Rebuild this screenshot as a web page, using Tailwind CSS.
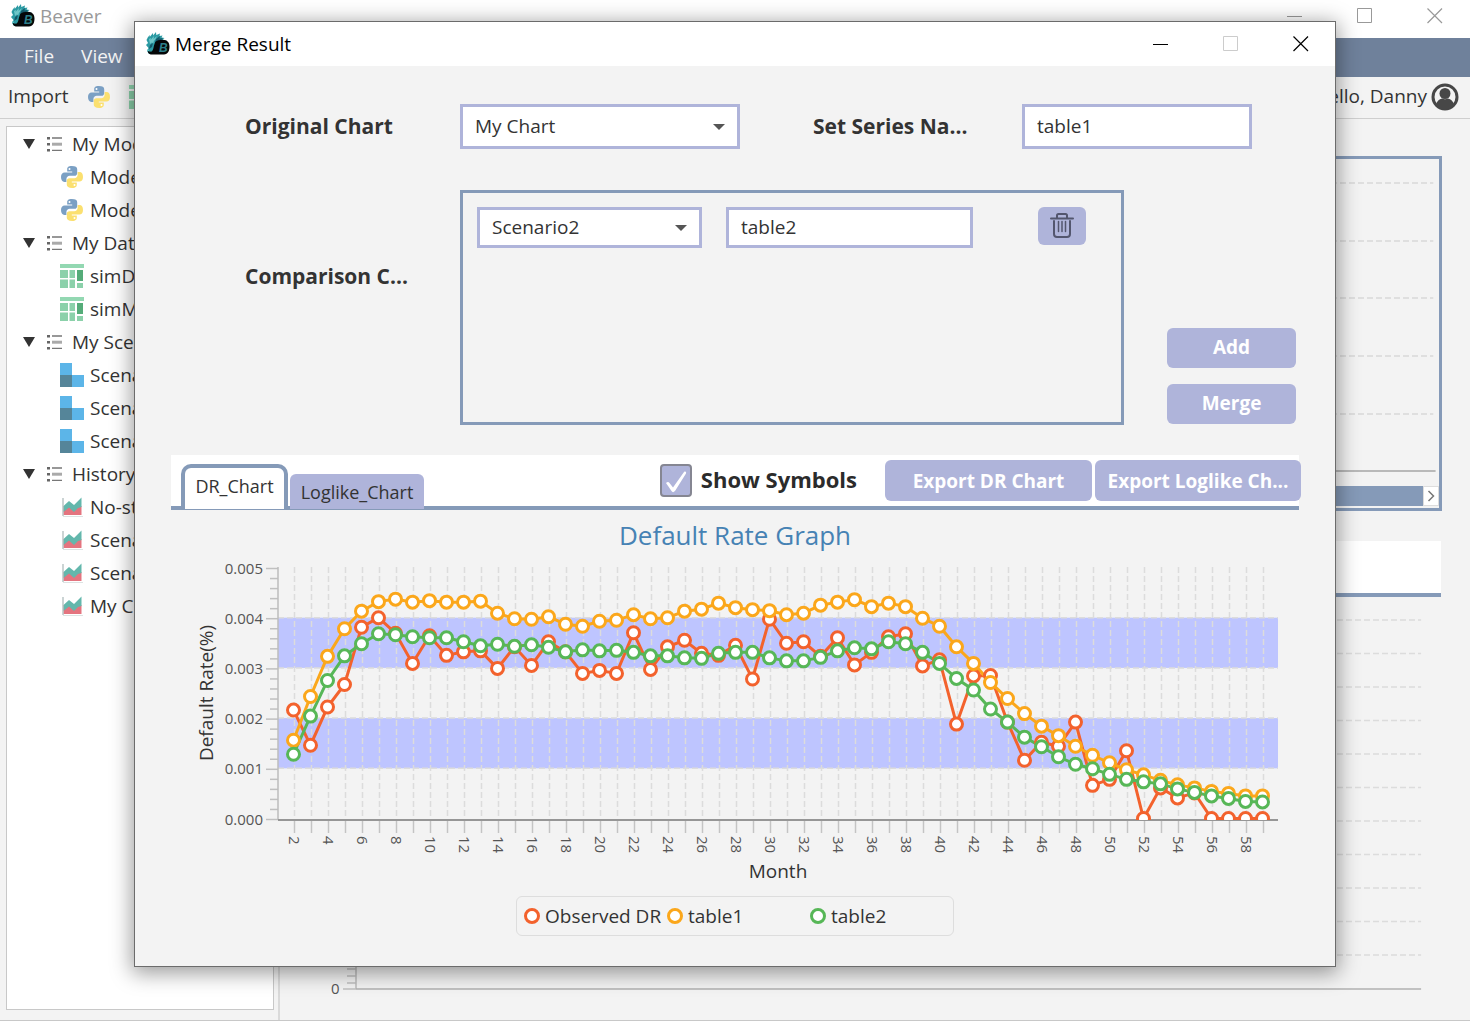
<!DOCTYPE html>
<html lang="en">
<head>
<meta charset="utf-8">
<meta name="viewport" content="width=device-width, initial-scale=1">
<title>Beaver</title>
<script src="https://cdn.jsdelivr.net/npm/@tailwindcss/browser@4"></script>
</head>
<body class="bg-[#f3f3f3] font-['Open_Sans','Noto_Sans',sans-serif] text-[19px] leading-6 text-[#333333]">

<!-- Shared icons -->
<svg class="hidden" aria-hidden="true">
  <symbol id="logo" viewBox="0 0 24 24">
    <path fill="#2b9aa3" d="M2 5l2-2-.3 2L7 1l.2 2.500L10 0l.3 3L14 1.500l-.5 2.500 3-.5-1 2 3 .5-2 1.500L21 9v6l-3 6-15 1-2-3 1.500-3L0 13l2-2L.5 8z"/>
    <path fill="#6fc7c9" d="M3 7l2-1-.5 2L8 4l-.5 3L11 4l-2 4-5 4zM1 17l2 1-1 2zM6 10l2-1-1 3z"/>
    <path fill="#14596a" d="M10 7l4-3-.5 2.500L17 6l-3 3-5 2zM4 13l3-2-1 4-3 2z"/>
    <path fill="#050708" d="M8.500 12c.5-3 3-4 6-4 6-1 9 2 9 6.500S22 22 18 22.500H6c-3 0-4.500-2-4-3.500 1.500 1 3.500 1 4.500-.5 1-1.500 1-4 2-6.500z"/>
    <text x="13" y="20" font-family="Liberation Sans" font-size="12" font-weight="700" font-style="italic" fill="#2b7f8a">B</text>
  </symbol>
  <symbol id="python" viewBox="0 0 24 24">
    <path fill="#7ba0c4" d="M11.800 1C8 1 7.200 2.600 7.200 4.200v2.300h5v.9H4.600C2.500 7.400 1 9 1 12s1.300 4.900 3.400 4.900h2V14c0-1.800 1.500-3.200 3.300-3.200h4.900c1.500 0 2.600-1.200 2.600-2.600v-4C17.200 2.200 15.500 1 11.800 1z"/>
    <path fill="#fbe070" d="M12.200 23c3.800 0 4.600-1.600 4.600-3.200v-2.300h-5v-.9h7.600c2.100 0 3.600-1.600 3.600-4.600s-1.300-4.900-3.400-4.900h-2V10c0 1.800-1.500 3.200-3.300 3.200H9.400c-1.500 0-2.600 1.200-2.600 2.600v4c0 2 1.700 3.200 5.400 3.200z"/>
    <circle cx="9.500" cy="4" r="1" fill="#fff"/><circle cx="14.500" cy="20" r="1" fill="#fff"/>
  </symbol>
  <symbol id="grid" viewBox="0 0 24 24">
    <path fill="#93d8b2" d="M0 0h24v4H0z"/>
    <path fill="#8bd1aa" d="M0 6h8v8H0zM9.500 6H15v8H9.500zM0 15.500h8V24H0zM9.500 15.500H15V24H9.500zM17 19h6v5h-6z"/>
    <path fill="#55ac79" d="M17 6h6v11h-6z"/>
  </symbol>
  <symbol id="blocks" viewBox="0 0 24 24">
    <path fill="#5cb5e8" d="M0 0h12v12h12v12H12V12H0z"/><path fill="#558599" d="M0 12h12v12H0z"/>
  </symbol>
  <symbol id="area" viewBox="0 0 24 24">
    <path fill="#e4747f" d="M3.500 11h18v9h-18z"/>
    <path fill="#63b7ac" d="M3.500 11L9 6l5 4 7.500-7.500V12L18 13l-4 4-5-4.500-5.500 4.500z"/>
    <path fill="none" stroke="#a9b8b8" stroke-width="1.200" d="M3 3v18"/><path stroke="#dde3e3" d="M3 21.500h20"/>
  </symbol>
  <symbol id="list" viewBox="0 0 16 16">
    <path fill="#666" d="M0 1h3v2.500H0zM0 7h3v2.500H0zM0 13h3v2.500H0z"/>
    <path stroke="#777" stroke-width="1.300" d="M5 2h10M5 14.300h10"/><path stroke="#aaa" stroke-width="3" d="M5 8.200h10"/>
  </symbol>
  <symbol id="open" viewBox="0 0 12 10"><path fill="#333" d="M0 0h12L6 10z"/></symbol>
  <symbol id="min" viewBox="0 0 16 16"><path stroke="currentColor" d="M0 8.500h15" shape-rendering="crispEdges"/></symbol>
  <symbol id="max" viewBox="0 0 16 16"><path fill="none" stroke="currentColor" d="M.5.5h14v14H.5z"/></symbol>
  <symbol id="close" viewBox="0 0 16 16"><path fill="none" stroke="currentColor" stroke-width="1.200" d="M.5.5l14.500 14.500M15 .5L.5 15"/></symbol>
</svg>

<div class="relative flex min-h-screen flex-col overflow-hidden border-b border-[#c8c8c8]">
  <!-- Main window -->
  <header class="flex h-[38px] items-center bg-white pr-[27px] pb-[7px] pl-[11px] text-[#999999]">
    <svg class="size-6"><use href="#logo"/></svg>
    <span class="ml-[5px]">Beaver</span>
    <div class="ml-auto flex gap-[54px]">
      <button aria-label="Minimize"><svg class="size-4"><use href="#min"/></svg></button>
      <button aria-label="Maximize"><svg class="size-4"><use href="#max"/></svg></button>
      <button aria-label="Close"><svg class="size-4"><use href="#close"/></svg></button>
    </div>
  </header>
  <nav class="flex h-[39px] items-center gap-[27px] bg-[#6f819b] pb-1 pl-6 text-[#f3f3f3]">
    <button>File</button>
    <button>View</button>
  </nav>
  <div class="flex h-[42px] items-center border-b border-[#cfcfcf] pr-[11px] pb-0.5 pl-2">
    <span class="pb-0.5">Import</span>
    <button class="ml-[18px]" aria-label="Import model"><svg class="size-6"><use href="#python"/></svg></button>
    <button class="ml-[18px]" aria-label="Import data"><svg class="size-6"><use href="#grid"/></svg></button>
    <span class="ml-auto pb-0.5">Hello, Danny</span>
    <svg class="ml-1 size-7" viewBox="0 0 28 28">
      <circle cx="14" cy="14" r="12" fill="#f3f3f3" stroke="#474747" stroke-width="3"/>
      <circle cx="14" cy="10.500" r="5.500" fill="#474747"/>
      <path fill="#474747" d="M5 22c1-4 3-6 6-6.500 2 1 4 1 6 0 3 .5 5 2.500 6 6.500-5 6-13 6-18 0z"/>
    </svg>
  </div>

  <main class="flex flex-1">
    <aside class="mt-[7px] mb-2.5 ml-1.5 w-[268px] border border-[#c8c8c8] bg-white">
      <ul id="tree"></ul>
    </aside>
    <section class="ml-1 flex flex-1 flex-col border-l-2 border-[#dadada] pr-7">
      <div class="mt-[37px] ml-4 flex h-[355px] flex-col border-[3px] border-[#859ab8]">
        <svg class="w-full flex-1" id="topChart"></svg>
        <div class="flex h-6 shrink-0 items-center">
          <div class="h-5 flex-1 bg-[#859ab8]"></div>
          <button class="h-5 w-4 border border-[#dddddd] bg-white" aria-label="Scroll right">
            <svg class="mx-auto h-3 w-2" viewBox="0 0 8 12"><path fill="none" stroke="#777" stroke-width="1.500" d="M1.500 1l5 5-5 5"/></svg>
          </button>
        </div>
      </div>
      <div class="mt-[30px] mr-px ml-4 h-14 border-b-4 border-[#859ab8] bg-white"></div>
      <svg class="w-full flex-1" id="bottomChart"></svg>
    </section>
  </main>

  <!-- Merge dialog -->
  <div role="dialog" aria-label="Merge Result" class="absolute inset-x-[134px] top-[21px] border border-[#6b6b6b] bg-[#f3f3f3] pb-[30px] shadow-[0_4px_20px_2px_rgba(0,0,0,0.4)]">
    <header class="flex h-[44px] items-center bg-white pr-[26px] pb-px pl-[11px] text-black">
      <svg class="size-6"><use href="#logo"/></svg>
      <h1 class="ml-[5px]">Merge Result</h1>
      <div class="ml-auto flex gap-[54px]">
        <button aria-label="Minimize"><svg class="size-4"><use href="#min"/></svg></button>
        <button class="text-[#cccccc]" aria-label="Maximize" disabled><svg class="size-4"><use href="#max"/></svg></button>
        <button aria-label="Close"><svg class="size-4"><use href="#close"/></svg></button>
      </div>
    </header>

    <form class="pt-[38px] pl-[110px]">
      <div class="flex items-center pr-[83px]">
        <label for="original" class="w-[215px] pb-0.5 text-[21px] leading-8 font-bold">Original Chart</label>
        <div class="relative flex-1">
          <select id="original" class="h-[45px] w-full appearance-none border-[3px] border-[#afb4da] bg-white pb-0.5 pl-3 outline-none"><option>My Chart</option></select>
          <svg class="pointer-events-none absolute top-5 right-[15px] h-1.5 w-3" viewBox="0 0 12 6"><path fill="#555" d="M0 0h12L6 6z"/></svg>
        </div>
        <label for="series1" class="ml-[73px] w-[209px] pb-0.5 text-[21px] leading-8 font-bold">Set Series Na...</label>
        <input id="series1" value="table1" class="h-[45px] w-[230px] border-[3px] border-[#afb4da] bg-white px-3 pb-0.5 outline-none">
      </div>

      <div class="mt-[41px] flex pr-[39px]">
        <span class="mt-[70px] w-[215px] text-[21px] leading-8 font-bold">Comparison C...</span>
        <div class="flex h-[235px] flex-1 items-start border-[3px] border-[#859ab8] pt-3.5 pl-3.5">
          <div class="relative w-[225px]">
            <select aria-label="Comparison chart" class="h-[41px] w-full appearance-none border-[3px] border-[#afb4da] bg-white pb-0.5 pl-3 outline-none"><option>Scenario2</option></select>
            <svg class="pointer-events-none absolute top-[18px] right-[15px] h-1.5 w-3" viewBox="0 0 12 6"><path fill="#555" d="M0 0h12L6 6z"/></svg>
          </div>
          <input aria-label="Comparison series name" value="table2" class="ml-6 h-[41px] w-[247px] border-[3px] border-[#afb4da] bg-white px-3 pb-0.5 outline-none">
          <button type="button" aria-label="Delete" class="ml-[65px] flex h-[38px] w-12 items-center justify-center rounded-md bg-[#afb4da] pb-0.5">
            <svg class="h-7 w-6" viewBox="0 0 24 28" fill="none" stroke="#53566e" stroke-width="2" stroke-linejoin="round" stroke-linecap="round"><path d="M1 7.500h22M7 7V4.500C7 3.500 7.500 3 8.500 3h7c1 0 1.500.5 1.500 1.500V7M4 10v13c0 2 1 3 3 3h10c2 0 3-1 3-3V10"/><path stroke-width="1.500" d="M8.500 10.500v10M12 10.500v10M15.500 10.500v10"/></svg>
          </button>
        </div>
        <div class="ml-[43px] flex w-[129px] flex-col justify-end gap-4 pb-px font-bold text-white">
          <button type="button" class="h-10 rounded-md bg-[#afb4da] pb-0.5">Add</button>
          <button type="button" class="h-10 rounded-md bg-[#afb4da] pb-0.5">Merge</button>
        </div>
      </div>
    </form>

    <div class="mt-[30px] mr-9 ml-9">
      <div class="flex h-[55px] items-end border-b-4 border-[#859ab8] bg-white pl-2.5">
        <button class="-mb-[3px] h-[45px] w-[107px] rounded-t-[10px] border-4 border-b-0 border-[#859ab8] bg-white pb-1.5 text-[18px]">DR_Chart</button>
        <button class="-mb-[3px] ml-0.5 h-[35px] w-[134px] rounded-t-md bg-[#afb4da] text-[18px]">Loglike_Chart</button>
        <div class="-mr-0.5 mb-[5px] ml-auto flex items-center">
          <label class="relative mr-7 flex items-center gap-[9px] text-[22px] font-bold text-[#2b2b2b]">
            <input type="checkbox" checked class="h-[33px] w-8 appearance-none rounded border-2 border-[#858692] bg-[#afb4da]">
            <svg class="pointer-events-none absolute left-1 h-6 w-6" viewBox="0 0 24 24"><path fill="#fff" d="M2 14c1.500-1.500 2.500-1.500 3.500 0L9 18.500 20 3c1.500-1 2.500 0 2 1.500L11 22c-1.500 1.500-2.500 1.500-3.500 0z"/></svg>
            <span class="pb-1">Show Symbols</span>
          </label>
          <button class="h-[41px] w-[207px] rounded-md bg-[#afb4da] font-bold text-white">Export DR Chart</button>
          <button class="ml-[3px] h-[41px] w-[206px] rounded-md bg-[#afb4da] font-bold whitespace-nowrap text-white">Export Loglike Ch...</button>
        </div>
      </div>

      <h2 class="mt-[7px] text-center text-[26px] leading-9 text-[#4682b4]">Default Rate Graph</h2>
      <svg id="rateChart" class="mt-[7px] block w-full overflow-visible" viewBox="0 0 1128 328"></svg>

      <ul class="mx-auto mt-2 flex h-10 w-[438px] items-center rounded-md border border-[#dddddd] pl-[7px]">
        <li class="flex w-[143px] items-center gap-[5px] whitespace-nowrap"><span class="size-4 shrink-0 rounded-full border-[3px] border-[#f3622d] bg-white"></span>Observed DR</li>
        <li class="flex w-[143px] items-center gap-[5px]"><span class="size-4 rounded-full border-[3px] border-[#fba71b] bg-white"></span>table1</li>
        <li class="flex items-center gap-[5px]"><span class="size-4 rounded-full border-[3px] border-[#57b757] bg-white"></span>table2</li>
      </ul>
    </div>
  </div>
</div>

<script>
  // Project tree
  const groups = [
    ['My Models', 'python', ['Model1', 'Model2']],
    ['My Datasets', 'grid', ['simDTS', 'simMEV']],
    ['My Scenarios', 'blocks', ['Scenario1', 'Scenario2', 'Scenario3']],
    ['History', 'area', ['No-stress', 'Scenario1', 'Scenario2', 'My Chart']],
  ];
  document.getElementById('tree').innerHTML = groups.map(([name, icon, items]) => `
    <li>
      <div class="flex h-[33px] items-center pl-4"><svg class="h-2.5 w-3"><use href="#open"/></svg><svg class="ml-3 size-4"><use href="#list"/></svg><span class="ml-[9px]">${name}</span></div>
      <ul>${items.map(t => `<li class="flex h-[33px] items-center pl-[53px]"><svg class="mr-1.5 size-6"><use href="#${icon}"/></svg>${t}</li>`).join('')}</ul>
    </li>`).join('');

  const line = (x1, y1, x2, y2, color, width = 1, dash = '') =>
    `<line x1="${x1}" y1="${y1}" x2="${x2}" y2="${y2}" stroke="${color}" stroke-width="${width}" stroke-dasharray="${dash}"/>`;

  // Default rate chart; series values are in units of 0.00001, months 2 to 59
  const series = [
    ['#f3622d', [216,146,222,267,381,400,369,309,364,325,332,334,299,342,305,352,332,289,295,289,370,297,342,355,329,325,345,278,397,349,352,323,360,306,331,362,368,304,316,188,284,285,192,116,152,144,192,66,78,135,0,61,41,51,0,0,0,0]],
    ['#fba71b', [156,243,323,378,413,432,437,431,434,431,431,433,409,398,397,402,387,383,393,395,406,398,400,413,417,429,420,416,414,406,409,425,431,436,422,429,422,399,383,342,309,271,239,209,184,165,144,126,111,97,87,76,67,61,54,50,45,45]],
    ['#57b757', [128,204,275,324,348,368,366,362,360,360,352,344,347,343,346,341,332,336,334,335,331,324,324,320,319,329,331,331,320,314,314,321,334,340,338,352,348,331,309,279,256,218,192,162,143,123,108,99,88,78,73,69,59,52,45,40,34,33]],
  ];
  const left = 107, right = 1107, base = 260, unit = 0.502;
  const px = i => 122.5 + i * 17, py = v => base - 1.5 - v * unit;
  let rate = `<clipPath id="plot"><rect x="107" y="0" width="1001" height="${base}"/></clipPath>`;
  for (const v of [400, 200]) rate += `<rect x="${left}" y="${py(v)}" width="${right - left}" height="${100 * unit}" fill="#bec5ff"/>`;
  for (const v of [400, 300, 200, 100]) rate += line(left, py(v), right, py(v), '#dcdcdc', 1.5, '6 3');
  for (let i = 0; i < 58; i++) {
    rate += line(px(i) + 1, 7, px(i) + 1, base, '#dcdcdc', 1.5, '6 3');
    rate += line(px(i) + 1, base, px(i) + 1, base + 13, '#c4c4c4', 1.5);
    if (i % 2 === 0) rate += `<text transform="translate(${px(i) - 5} ${base + 16}) rotate(90)" font-size="15" fill="#555">${i + 2}</text>`;
  }
  for (let k = 0; k <= 25; k++) {
    const y = base - 0.5 - k * 20 * unit;
    rate += line(k % 5 ? 99 : 95, y, left, y, '#c0c0c0', 1.5);
    if (k % 5 === 0) rate += `<text x="92" y="${y + 5}" text-anchor="end" font-size="15" fill="#555">${(k / 5000).toFixed(3)}</text>`;
  }
  rate += line(left, 7, left, base, '#bdbdbd', 1.5) + line(left, base, right, base, '#969696', 2);
  rate += '<g clip-path="url(#plot)">';
  for (const [color, data] of series)
    rate += `<polyline fill="none" stroke="${color}" stroke-width="3" points="${data.map((v, i) => px(i) + ',' + py(v)).join(' ')}"/>`;
  for (const [color, data] of series)
    rate += data.map((v, i) => `<circle cx="${px(i)}" cy="${py(v)}" r="6" fill="#fff" stroke="${color}" stroke-width="3"/>`).join('');
  rate += '</g>';
  rate += '<text x="607" y="318" text-anchor="middle" font-size="19" fill="#333">Month</text>';
  rate += '<text transform="translate(42 133) rotate(-90)" text-anchor="middle" font-size="19" fill="#333">Default Rate(%)</text>';
  document.getElementById('rateChart').innerHTML = rate;

  // Charts of the main window
  let upper = '';
  for (const y of [24, 82, 139, 197, 255]) upper += line(60, y, '99.500%', y, '#dfdfdf', 2, '6 3');
  document.getElementById('topChart').innerHTML = upper + line(60, 312, '99.700%', 312, '#b9b9b9', 2);

  let lower = '';
  for (let k = 0; k < 11; k++) lower += line(76, 23 + k * 33.5, '98.200%', 23 + k * 33.5, '#dcdcdc', 1.5, '6 3');
  for (let y = 372; y < 390; y += 7) lower += line(67, y, 76, y, '#c0c0c0', 1.5);
  lower += line(76, 0, 76, 392, '#bdbdbd', 1.5) + line(76, 392, '98.200%', 392, '#b0b0b0', 1.5) + line(63, 392, 76, 392, '#c0c0c0', 1.5);
  document.getElementById('bottomChart').innerHTML = lower + '<text x="51" y="397" font-size="15" fill="#555">0</text>';
</script>
</body>
</html>
